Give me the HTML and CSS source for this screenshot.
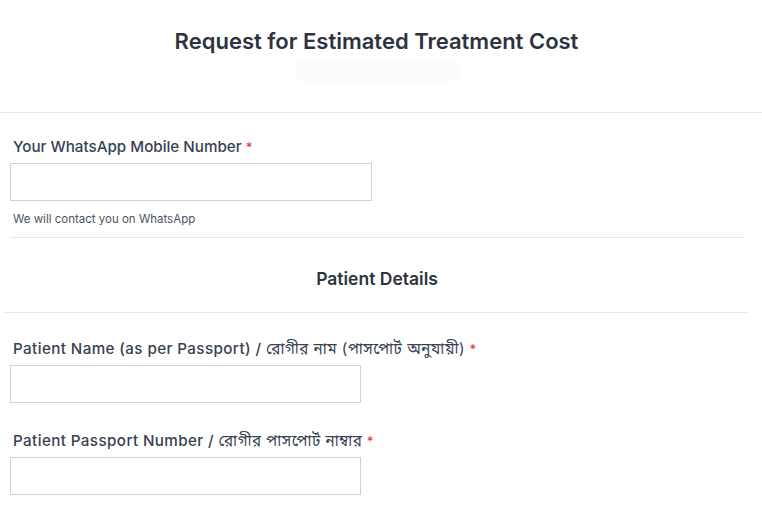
FILE: index.html
```html
<!DOCTYPE html>
<html>
<head>
<meta charset="utf-8">
<link rel="stylesheet" href="styles.css">
</head>
<body>
<header class="page-header">
  <h1 class="title">Request for Estimated Treatment Cost</h1>
  <div class="ghost"></div>
</header>
<form class="form">
  <section class="field field-first">
    <label class="label">Your WhatsApp Mobile Number <span class="req">*</span></label>
    <div class="input input-wide"></div>
    <p class="help">We will contact you on WhatsApp</p>
  </section>
  <hr class="divider divider-a">
  <h2 class="section-title">Patient Details</h2>
  <hr class="divider divider-b">
  <section class="field field-name">
    <label class="label label-bn">Patient Name (as per Passport) / <span class="bn">রোগীর নাম (পাসপোর্ট অনুযায়ী)</span> <span class="req">*</span></label>
    <div class="input"></div>
  </section>
  <section class="field field-pass">
    <label class="label label-bn">Patient Passport Number / <span class="bn">রোগীর পাসপোর্ট নাম্বার</span> <span class="req">*</span></label>
    <div class="input"></div>
  </section>
</form>
</body>
</html>
```
FILE: styles.css
```css
html, body {
  margin: 0;
  padding: 0;
  background: #ffffff;
}
body {
  font-family: Inter, "Noto Sans", "Noto Sans Bengali", "DejaVu Sans", sans-serif;
  color: #374151;
  width: 762px;
  height: 510px;
  overflow: hidden;
}
.page-header {
  height: 112px;
  border-bottom: 1px solid #e8e8ee;
  display: flex;
  flex-direction: column;
  align-items: center;
  padding-right: 9px;
}
.title {
  margin: 27px 0 0 0;
  font-size: 22px;
  line-height: 28px;
  font-weight: 600;
  color: #2d3340;
}
.ghost {
  margin-top: 5px;
  width: 166px;
  height: 22px;
  border-radius: 11px;
  background: #fcfcfd;
}
.form {
  display: flex;
  flex-direction: column;
}
.field {
  padding-left: 10px;
  display: flex;
  flex-direction: column;
  align-items: flex-start;
}
.field-first {
  margin-top: 24px;
}
.label {
  display: block;
  padding-left: 3px;
  font-size: 15.2px;
  line-height: 20px;
  font-weight: 500;
  color: #374151;
  margin-bottom: 6px;
}
.label-bn {
  letter-spacing: 0.4px;
}
.bn {
  font-weight: 400;
  letter-spacing: 0.5px;
}
.req {
  color: #e53e3e;
  font-size: 13px;
  letter-spacing: 0;
}
.input {
  box-sizing: border-box;
  width: 351px;
  height: 38px;
  border: 1px solid #cdd1d9;
  background: #fff;
}
.input-wide {
  width: 362px;
}
.help {
  margin: 10px 0 0 3px;
  font-size: 11.5px;
  line-height: 16px;
  color: #4b5563;
}
.divider {
  border: 0;
  height: 1px;
  background: #e8e8ec;
  margin: 0;
}
.divider-a {
  margin: 10px 18px 0 10px;
}
.section-title {
  margin: 30px 8px 0 0;
  text-align: center;
  font-size: 17.5px;
  line-height: 22px;
  font-weight: 600;
  color: #2d3340;
}
.divider-b {
  margin: 22px 14px 0 4px;
}
.field-name {
  margin-top: 26px;
}
.field-pass {
  margin-top: 28px;
}
```
